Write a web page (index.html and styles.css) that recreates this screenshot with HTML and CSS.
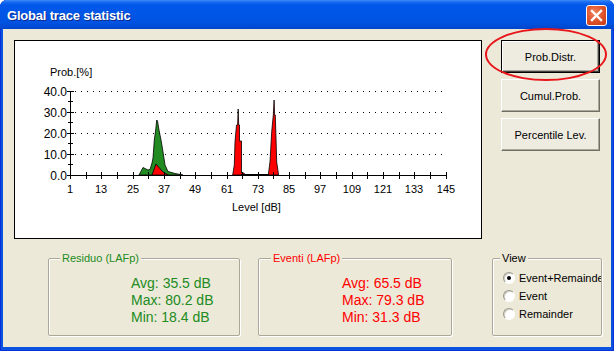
FILE: index.html
```html
<!DOCTYPE html>
<html>
<head>
<meta charset="utf-8">
<title>Global trace statistic</title>
<link rel="stylesheet" href="styles.css">
</head>
<body>
<div class="window">
  <div class="titlebar">
    <span class="title">Global trace statistic</span>
    <button class="close" aria-label="Close">
      <svg width="19" height="19" viewBox="0 0 19 19"><path d="M5 5L14 14M14 5L5 14" stroke="#fff" stroke-width="2.4" stroke-linecap="square"/></svg>
    </button>
  </div>
  <div class="client">
    <div class="top-row">
      <div class="chart">
        <svg class="plot" width="466" height="197" viewBox="15 41 466 197">
          <g class="grid" stroke="#000" stroke-dasharray="1 5" shape-rendering="crispEdges">
            <line x1="75" y1="91.5" x2="446" y2="91.5"/>
            <line x1="75" y1="112.5" x2="446" y2="112.5"/>
            <line x1="75" y1="133.5" x2="446" y2="133.5"/>
            <line x1="75" y1="154.5" x2="446" y2="154.5"/>
          </g>
          <path d="M139 175 L143 167.5 L148 170 L150 169.5 L152 163 L153 158 L154.3 140 L155.7 130 L156.7 120 L157.5 121 L159 130 L161 140 L162.7 150 L165 165 L168 171.5 L175 173.5 L183 175 Z" fill="#228B22" stroke="#000" stroke-width="0.8"/>
          <path d="M152 175 L156 164 L159 167.5 L162.7 171.7 L168 175 Z" fill="#ff0000" stroke="#000" stroke-width="0.8"/>
          <path d="M232.7 175 L234.3 165 L235 141.7 L236.5 125 L237.6 125 L238.2 109 L238.7 125 L239.5 125 L239.5 141 L241.5 141 L241.5 173 L244 173 L245 175 Z" fill="#ff0000" stroke="#000" stroke-width="0.8"/>
          <path d="M241 174.5 H269" stroke="#000" stroke-width="1"/>
          <path d="M268.3 175 L270 161.7 L271.7 131.7 L273.3 115 L274.1 100 L274.6 115 L275.3 115 L276 138 L276.7 162 L278.3 173 L278.5 175 Z" fill="#ff0000" stroke="#000" stroke-width="0.8"/>
          <g stroke="#000" shape-rendering="crispEdges" fill="none">
            <path d="M70.5 91 V176"/>
            <path d="M70 175.5 H447"/>
            <path d="M67 91.5h7M67 112.5h7M67 133.5h7M67 154.5h7M67 175.5h7M68 101.5h5M68 122.5h5M68 143.5h5M68 164.5h5"/>
            <path d="M70.5 172v7M86.5 172v7M101.5 172v7M117.5 172v7M133.5 172v7M148.5 172v7M164.5 172v7M180.5 172v7M195.5 172v7M211.5 172v7M227.5 172v7M242.5 172v7M258.5 172v7M273.5 172v7M289.5 172v7M305.5 172v7M320.5 172v7M336.5 172v7M352.5 172v7M367.5 172v7M383.5 172v7M399.5 172v7M414.5 172v7M430.5 172v7M446.5 172v7"/>
          </g>
          <text class="axis-title" x="50" y="76">Prob.[%]</text>
          <g class="ylabels" text-anchor="end">
            <text x="67" y="96">40.0</text>
            <text x="67" y="117">30.0</text>
            <text x="67" y="138">20.0</text>
            <text x="67" y="159">10.0</text>
            <text x="67" y="180">0.0</text>
          </g>
          <g class="xlabels" text-anchor="middle">
            <text x="70" y="193">1</text>
            <text x="101" y="193">13</text>
            <text x="133" y="193">25</text>
            <text x="164" y="193">37</text>
            <text x="195" y="193">49</text>
            <text x="227" y="193">61</text>
            <text x="258" y="193">73</text>
            <text x="289" y="193">85</text>
            <text x="320" y="193">97</text>
            <text x="352" y="193">109</text>
            <text x="383" y="193">121</text>
            <text x="414" y="193">133</text>
            <text x="446" y="193">145</text>
          </g>
          <text class="axis-title" x="232" y="211">Level [dB]</text>
        </svg>
      </div>
      <div class="buttons">
        <button class="btn default">Prob.Distr.</button>
        <button class="btn">Cumul.Prob.</button>
        <button class="btn">Percentile Lev.</button>
      </div>
    </div>
    <div class="bottom-row">
      <div class="group residuo">
        <span class="legend">Residuo (LAFp)</span>
        <div class="values">
          <div>Avg: 35.5 dB</div>
          <div>Max: 80.2 dB</div>
          <div>Min: 18.4 dB</div>
        </div>
      </div>
      <div class="group eventi">
        <span class="legend">Eventi (LAFp)</span>
        <div class="values">
          <div>Avg: 65.5 dB</div>
          <div>Max: 79.3 dB</div>
          <div>Min: 31.3 dB</div>
        </div>
      </div>
      <div class="group view">
        <span class="legend">View</span>
        <div class="radios">
          <div class="radio-row"><span class="radio checked"></span><span>Event+Remainder</span></div>
          <div class="radio-row"><span class="radio"></span><span>Event</span></div>
          <div class="radio-row"><span class="radio"></span><span>Remainder</span></div>
        </div>
      </div>
    </div>
  </div>
  <div class="highlight"></div>
</div>
</body>
</html>
```
FILE: styles.css
```css
* { box-sizing: border-box; }
html, body { margin: 0; padding: 0; background: #fff; }
body { font-family: "Liberation Sans", Arial, sans-serif; }

.window {
  position: relative;
  width: 614px;
  height: 351px;
  display: flex;
  flex-direction: column;
  background: #0B52DF;
  border-radius: 7px 7px 0 0;
  overflow: hidden;
  box-shadow: inset 1px 0 0 #0831D9, inset -1px 0 0 #0831D9, inset 0 -1px 0 #0831D9;
}

.titlebar {
  height: 29px;
  flex: none;
  display: flex;
  align-items: flex-start;
  justify-content: space-between;
  padding: 0 7px 0 7px;
  background: linear-gradient(to bottom, #3C8EF8 0px, #1A6AF2 2px, #0058EA 5px, #0055E5 55%, #0052E0 80%, #0045CC 100%);
}

.title {
  color: #fff;
  font-weight: bold;
  font-size: 13px;
  line-height: 15px;
  padding-top: 8px;
  letter-spacing: -0.2px;
  text-shadow: 1px 1px 0 #0A2A8C;
}

.close {
  width: 21px;
  height: 21px;
  margin-top: 5px;
  padding: 0;
  border: 1px solid #fff;
  border-radius: 3px;
  background: radial-gradient(circle at 40% 35%, #F0845E 0%, #E0542C 50%, #C43A15 100%);
  display: flex;
  align-items: center;
  justify-content: center;
}
.close svg { display: block; }

.client {
  flex: 1;
  margin: 0 3px 4px 3px;
  background: #ECE9D8;
}

.top-row {
  display: flex;
  padding: 11px 0 0 11px;
}

.chart {
  width: 468px;
  height: 199px;
  border: 1px solid #000;
  background: #fff;
}
.plot { display: block; }
.plot text { font-family: "Liberation Sans", Arial, sans-serif; fill: #000; }
.ylabels text { font-size: 12px; }
.xlabels text { font-size: 11px; }
.axis-title { font-size: 11px; }

.buttons {
  margin-left: 19px;
  display: flex;
  flex-direction: column;
  gap: 6px;
}

.btn {
  width: 99px;
  height: 33px;
  padding: 0;
  font-family: "Liberation Sans", Arial, sans-serif;
  font-size: 11px;
  color: #000;
  background: #EEEBE0;
  border: 1px solid;
  border-color: #fff #716F64 #716F64 #fff;
  box-shadow: inset -1px -1px 0 #ACA899;
}
.btn.default {
  border-color: #000;
  box-shadow: inset 1px 1px 0 #fff, inset -1px -1px 0 #404040, inset -2px -2px 0 #ACA899;
}

.bottom-row {
  display: flex;
  margin-top: 19px;
  padding-left: 45px;
}

.group {
  position: relative;
  height: 78px;
  border: 1px solid #ACA899;
  border-radius: 2px;
  box-shadow: inset 1px 1px 0 #fff, 1px 1px 0 #fff;
}
.residuo { width: 192px; color: #228B22; }
.eventi { width: 194px; margin-left: 18px; color: #ff0000; }
.view { width: 110px; margin-left: 40px; color: #000; }

.legend {
  position: absolute;
  top: -7px;
  left: 11px;
  padding: 0 2px;
  background: #ECE9D8;
  font-size: 11px;
  line-height: 13px;
}
.eventi .legend { left: 12px; }
.view .legend { left: 7px; }

.values {
  padding: 16px 0 0 82px;
  font-size: 14px;
  line-height: 17px;
  white-space: nowrap;
}
.eventi .values { padding-left: 83px; }

.radios {
  padding: 10px 0 0 10px;
  overflow: hidden;
  white-space: nowrap;
  font-size: 11px;
}
.radio-row {
  display: flex;
  align-items: center;
  height: 18px;
}
.radio {
  position: relative;
  flex: none;
  width: 12px;
  height: 12px;
  margin-right: 4px;
  border-radius: 50%;
  background: #fff;
  border: 1px solid;
  border-color: #9A988C #fff #fff #9A988C;
  box-shadow: inset 1px 1px 0 #D4D0C8;
}
.radio.checked::after {
  content: "";
  position: absolute;
  left: 3px;
  top: 3px;
  width: 4px;
  height: 4px;
  border-radius: 50%;
  background: #000;
}

.highlight {
  position: absolute;
  left: 485px;
  top: 28px;
  width: 122px;
  height: 53px;
  border: 2px solid #E8161B;
  border-radius: 50%;
  pointer-events: none;
}
```
